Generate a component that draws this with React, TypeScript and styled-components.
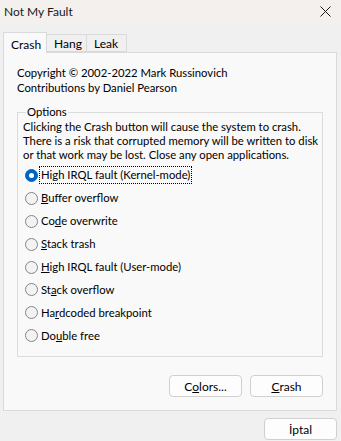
import React, { useState } from "react";
import styled, { createGlobalStyle } from "styled-components";

const GlobalStyle = createGlobalStyle`
  html, body {
    margin: 0;
    padding: 0;
    background: #f0f0f0;
  }
  body {
    font-family: Lato, "Noto Sans", "DejaVu Sans", sans-serif;
    font-size: 11.3px;
    color: #000;
  }
`;

const crashOptions = [
  { pre: "High IRQL fault (Kernel-mode)", key: "", post: "" },
  { pre: "", key: "B", post: "uffer overflow" },
  { pre: "Co", key: "d", post: "e overwrite" },
  { pre: "", key: "S", post: "tack trash" },
  { pre: "", key: "H", post: "igh IRQL fault (User-mode)" },
  { pre: "St", key: "a", post: "ck overflow" },
  { pre: "Ha", key: "r", post: "dcoded breakpoint" },
  { pre: "Do", key: "u", post: "ble free" },
];

const App = () => {
  const [selected, setSelected] = useState(0);
  const [tab, setTab] = useState("Crash");

  return (
    <>
      <GlobalStyle />
      <Window>
        <TitleBar>
          <Title>Not My Fault</Title>
          <CloseButton aria-label="Close">
            <svg width="11" height="11" viewBox="0 0 11 11">
              <path d="M0.5 0.5 L10.5 10.5 M10.5 0.5 L0.5 10.5" stroke="#1b1b1b" strokeWidth="1" fill="none" />
            </svg>
          </CloseButton>
        </TitleBar>

        <Content>
          <TabStrip>
            {["Crash", "Hang", "Leak"].map((t) => (
              <Tab key={t} active={tab === t} onClick={() => setTab(t)}>
                {t}
              </Tab>
            ))}
          </TabStrip>

          <Panel>
            <Credits>
              <div>Copyright © 2002-2022 Mark Russinovich</div>
              <div>Contributions by Daniel Pearson</div>
            </Credits>

            <Group>
              <Legend>Options</Legend>
              <Description>
                Clicking the Crash button will cause the system to crash.
                <br />
                There is a risk that corrupted memory will be written to disk
                <br />
                or that work may be lost. Close any open applications.
              </Description>
              <RadioList>
                {crashOptions.map((o, i) => (
                  <RadioRow key={i} onClick={() => setSelected(i)}>
                    <RadioCircle checked={selected === i} />
                    <RadioLabel focused={selected === i}>
                      {o.pre}
                      {o.key && <u>{o.key}</u>}
                      {o.post}
                    </RadioLabel>
                  </RadioRow>
                ))}
              </RadioList>
            </Group>

            <ButtonRow>
              <DialogButton>
                C<u>o</u>lors...
              </DialogButton>
              <DialogButton>
                <u>C</u>rash
              </DialogButton>
            </ButtonRow>
          </Panel>

          <Footer>
            <DialogButton>İptal</DialogButton>
          </Footer>
        </Content>
      </Window>
    </>
  );
};

const Window = styled.div`
  width: 341px;
  height: 441px;
  display: flex;
  flex-direction: column;
  background: #f0f0f0;
  overflow: hidden;
`;

const TitleBar = styled.div`
  height: 24px;
  flex: none;
  display: flex;
  align-items: center;
  justify-content: space-between;
  background: #f3f0ee;
  padding: 0 0 0 4px;
`;

const Title = styled.div`
  font-size: 12px;
  color: #1a1a1a;
  padding-bottom: 2px;
`;

const CloseButton = styled.div`
  width: 28px;
  height: 24px;
  display: flex;
  align-items: center;
  justify-content: center;
  margin-right: 2px;
  padding-bottom: 2px;
`;

const Content = styled.div`
  flex: 1;
  display: flex;
  flex-direction: column;
  padding: 8px 4px 0 3px;
`;

const TabStrip = styled.div`
  display: flex;
  align-items: flex-end;
  height: 21px;
  position: relative;
  z-index: 1;
  margin-bottom: -1px;
`;

const Tab = styled.div<{ active: boolean }>`
  box-sizing: border-box;
  height: ${(p) => (p.active ? 21 : 18)}px;
  margin-bottom: ${(p) => (p.active ? 0 : 1)}px;
  padding: ${(p) => (p.active ? "2px 6px 0 7px" : "0 7px")};
  width: ${(p) => (p.active ? 44 : 40)}px;
  background: ${(p) => (p.active ? "#f9f9f9" : "#f0f0f0")};
  border: 1px solid #dadada;
  border-bottom: ${(p) => (p.active ? "none" : "1px solid #dadada")};
  border-left: ${(p) => (p.active ? "1px solid #dadada" : "none")};
  display: flex;
  align-items: center;
  font-size: 12px;
  color: #000;
  cursor: default;
`;

const Panel = styled.div`
  box-sizing: border-box;
  width: 334px;
  height: 359px;
  background: #f9f9f9;
  border: 1px solid #dadada;
  padding: 12px 13px 0 13px;
  display: flex;
  flex-direction: column;
`;

const Credits = styled.div`
  line-height: 15px;
  margin-bottom: 10px;
`;

const Group = styled.fieldset`
  box-sizing: border-box;
  margin: 0;
  width: 306px;
  height: 252px;
  border: 1px solid #dcdcdc;
  padding: 0 0 0 5px;
`;

const Legend = styled.legend`
  padding: 0 1px;
  margin-left: 3px;
  line-height: 14px;
`;

const Description = styled.div`
  margin-top: 1px;
  line-height: 14px;
  white-space: nowrap;
`;

const RadioList = styled.div`
  display: flex;
  flex-direction: column;
  margin-top: 2px;
`;

const RadioRow = styled.div`
  height: 22.9px;
  display: flex;
  align-items: center;
  gap: 1px;
  cursor: default;
`;

const RadioCircle = styled.span<{ checked: boolean }>`
  box-sizing: border-box;
  width: 13px;
  height: 13px;
  border-radius: 50%;
  flex: none;
  margin-left: 2px;
  background: ${(p) => (p.checked ? "#0067c0" : "#f3f3f3")};
  border: 1px solid ${(p) => (p.checked ? "#0067c0" : "#858585")};
  display: flex;
  align-items: center;
  justify-content: center;
  &::after {
    content: "";
    display: ${(p) => (p.checked ? "block" : "none")};
    width: 5px;
    height: 5px;
    border-radius: 50%;
    background: #fff;
  }
`;

const RadioLabel = styled.span<{ focused: boolean }>`
  padding: 1px 1px 2px 1px;
  border: 1px dotted ${(p) => (p.focused ? "#000" : "transparent")};
  line-height: 13px;
  font-size: 11.3px;
  color: #000;
  white-space: nowrap;
`;

const ButtonRow = styled.div`
  display: flex;
  justify-content: flex-end;
  gap: 8px;
  width: 306px;
  margin-top: 18px;
`;

const DialogButton = styled.button`
  box-sizing: border-box;
  width: 73px;
  height: 22px;
  background: #fdfdfd;
  border: 1px solid #d0d0d0;
  border-radius: 4px;
  font-family: inherit;
  font-size: 12px;
  color: #000;
  padding: 0;
  display: flex;
  align-items: center;
  justify-content: center;
`;

const Footer = styled.div`
  display: flex;
  justify-content: flex-end;
  padding-top: 7px;
  padding-right: 0;
`;

export default App;
